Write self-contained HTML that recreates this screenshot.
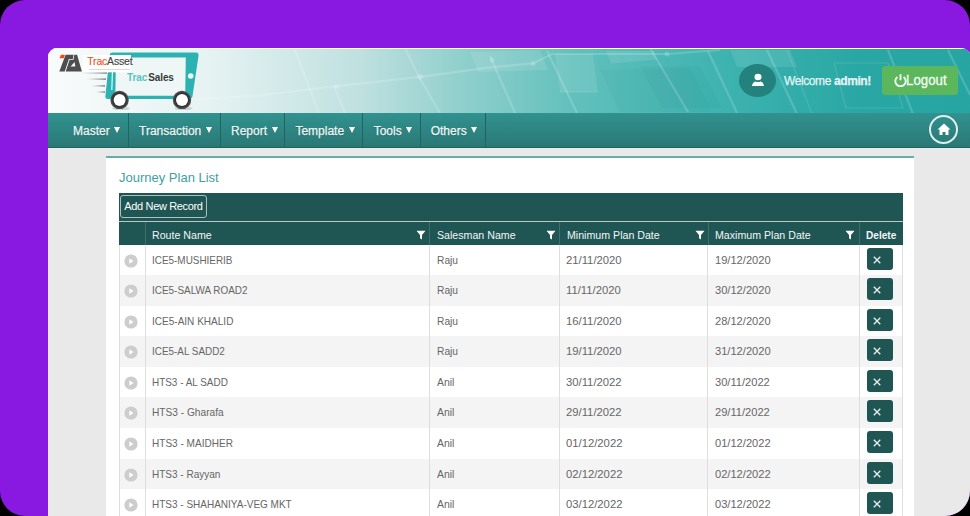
<!DOCTYPE html>
<html><head><meta charset="utf-8">
<style>
*{margin:0;padding:0;box-sizing:border-box}
html,body{width:970px;height:516px;overflow:hidden;background:#000;font-family:"Liberation Sans",sans-serif}
#frame{position:absolute;left:0;top:0;width:970px;height:516px;border-radius:25px;background:#8919e0;overflow:hidden}
#card{position:absolute;left:48px;top:48px;width:923px;height:480px;border-radius:9px 10px 0 0;overflow:hidden;background:#e9e9e9}
#hdr{position:absolute;left:0;top:0;width:923px;height:65px;background:linear-gradient(90deg,#f8fbfb 0%,#f0f7f7 8%,#e7f3f3 17%,#bee0df 34%,#8fcfcc 45%,#62c0bc 57%,#3eb3b0 73%,#29a7a4 88%,#27a5a2 100%)}
#nav{position:absolute;left:0;top:65px;width:923px;height:35px;background:linear-gradient(#31928f,#2a7875);border-bottom:1px solid #1d6461}
.ni{position:absolute;top:0.8px;height:35px;color:#eef6f5;font-size:12px;line-height:35px;white-space:nowrap;-webkit-text-stroke:0.25px #eef6f5;text-shadow:0 1px 1px rgba(0,50,50,.35)}
.ni i{display:inline-block;width:0;height:0;border-left:3.3px solid transparent;border-right:3.3px solid transparent;border-top:6px solid #fff;margin-left:4.5px;position:relative;top:-1.5px}
.sep{position:absolute;top:0;width:1px;height:34px;background:#1f6463}
.abs{position:absolute}
#panel{position:absolute;left:106px;top:156px;width:808px;height:400px;background:#fff;border-top:2px solid #62b0ac}
#title{position:absolute;left:119px;top:170px;font-size:13px;color:#42a09e;white-space:nowrap}
#tbar{position:absolute;left:119px;top:193px;width:784px;height:28px;background:#1f5553}
#addbtn{position:absolute;left:1px;top:2px;width:87px;height:23px;border:1px solid #a9c3c1;border-radius:3px;color:#fff;font-size:11px;line-height:21px;text-align:center;white-space:nowrap;letter-spacing:-0.35px}
#thead{position:absolute;left:119px;top:222px;width:784px;height:23px;background:#1f5553;color:#f2f7f7;font-size:11.5px}
#thead .h{position:absolute;top:1.5px;height:23px;line-height:23px;white-space:nowrap;transform-origin:0 50%;transform:scaleX(.924)}
#thead .s{position:absolute;top:0;width:1px;height:23px;background:#3d6f6c}
.flt{position:absolute;top:7.7px}
#tline{position:absolute;left:119px;top:221px;width:784px;height:1px;background:#b9c9c8}
.row{position:absolute;left:119px;width:783px;height:30px;background:#fff;font-size:11px;color:#666}
.row.alt{background:#f4f4f4}
.row .c{position:absolute;top:0;line-height:30px;white-space:nowrap;transform-origin:0 50%}
.c1{left:33px}.c2{left:317.7px}.c3{left:447.2px}.c4{left:595.7px}
.exp{position:absolute;left:5.3px;top:9.3px;width:14px;height:14px}
.del{position:absolute;left:747.6px;top:3.2px;width:26.5px;height:22px;background:#1f5553;border-radius:3px}.del svg{display:block}
#vlines div{position:absolute;top:245px;width:1px;height:280px;background:#dedede}
</style></head><body>
<div id="frame">
 <div id="card">
  <div id="hdr">
   <svg class="abs" style="left:0;top:0" width="923" height="65" viewBox="48 48 923 65">
    <g fill="#fff" fill-opacity="0.10">
     <path d="M606 51 L654 51 L657 59.5 L611 63.5Z"/>
     <path d="M555 54 L593 54 L598 92 L560 92Z"/>
     <path d="M730 50 L790 50 L797 67 L737 67Z"/>
     <path d="M470 52 L540 50 L548 70 L478 72Z"/>
    </g>
    <g fill="#0c6f6c" fill-opacity="0.05">
     <path d="M640 66 L700 66 L722 108 L662 108Z"/>
     <path d="M600 70 L690 68 L712 112 L620 112Z"/>
    </g>
    <g stroke="#fff" stroke-opacity="0.17" stroke-width="2.2" fill="none">
     <path d="M294 48 L319 113"/>
     <path d="M334 86 L345 113"/>
     <path d="M405 48 L418 75 L440 113"/>
     <path d="M490 56 L515 113"/>
     <path d="M547 51 L577 113"/>
     <path d="M650 48 L688 112"/>
     <path d="M708 51 L737 113"/>
     <path d="M767 50 L797 114"/>
     <path d="M888 50 L913 114"/>
     <path d="M948 50 L970 95"/>
     <path d="M180 100 L257 95.6 L337 86.2 L420.3 76.8 L490 67.4 L533 63.4 L552 54 L667 54 L720 50"/>
    </g>
    <g stroke="#fff" stroke-opacity="0.13" stroke-width="1.2" fill="none">
     <path d="M834 63 L888 63 L903 108 L846 108Z"/>
     <path d="M787 50 L812 114"/>
     <path d="M560 92 L598 92"/>
    </g>
    <g fill="#fff" fill-opacity="0.18"><circle cx="420.3" cy="76.8" r="3"/><circle cx="337" cy="86.2" r="2.5"/><circle cx="492" cy="60" r="2.5"/><circle cx="533" cy="63.4" r="2.5"/><circle cx="667" cy="54" r="2.5"/></g>
   </svg>
   <!-- logo -->
   <svg class="abs" style="left:0;top:0" width="200" height="64" viewBox="48 48 200 64">
    <defs>
     <linearGradient id="sl" x1="0" x2="1"><stop offset="0" stop-color="#999" stop-opacity="0"/><stop offset="1" stop-color="#555"/></linearGradient>
     <radialGradient id="wh" cx="0.5" cy="0.5" r="0.5"><stop offset="0.6" stop-color="#222"/><stop offset="1" stop-color="#555"/></radialGradient>
    </defs>
    <rect x="80" y="72.3" width="27" height="1.4" fill="url(#sl)" opacity=".8"/>
    <rect x="86" y="78.4" width="20" height="1.4" fill="url(#sl)" opacity=".8"/>
    <rect x="91" y="85.2" width="14" height="1.4" fill="url(#sl)" opacity=".8"/>
    <rect x="96" y="91.3" width="9" height="1.4" fill="url(#sl)" opacity=".8"/>
    <path d="M112 52.5 H196 Q199 52.5 198.5 56 L192.5 96 Q192 99 189 99 H108 Q105 99 105.4 96 L109.6 55 Q110 52.5 112 52.5Z" fill="#2cb3b1"/>
    <path d="M116 57.5 H185.8 L185.2 95.8 H115.3Z" fill="#eef6f6"/>
    <path d="M112.5 70 L111.8 90" stroke="#dff" stroke-width="1.2"/>
    <circle cx="190.7" cy="76" r="2.8" fill="#eef6f6"/>
    <rect x="82.5" y="55" width="48.5" height="17.3" fill="#fff"/>
    <ellipse cx="121" cy="108.5" rx="9" ry="1.6" fill="#000" opacity=".15"/><ellipse cx="183.5" cy="108.5" rx="9" ry="1.6" fill="#000" opacity=".15"/>
    <circle cx="119.6" cy="99.9" r="9.2" fill="url(#wh)"/>
    <circle cx="119.6" cy="99.9" r="6" fill="#fff"/>
    <circle cx="182" cy="99.9" r="9.2" fill="url(#wh)"/>
    <circle cx="182" cy="99.9" r="6" fill="#fff"/>
    <path d="M59.6 58.2 L60.9 54.7 H64.9 L63.8 58.2Z" fill="#f3461a"/>
    <path d="M59.3 71.6 L65.6 54.7 H73.6 L72.8 58.9 H68.9 L64.7 71.6Z" fill="#4e4e4e"/>
    <path d="M65.7 71.6 L69.6 59.7 H73.5 L74.3 54.7 H77.1 L81.9 71.6Z M70.6 66.5 H75.3 L74.6 62Z" fill="#4e4e4e" fill-rule="evenodd"/>
   </svg>
   <div class="abs" style="left:39.3px;top:6.6px;font-size:10.5px;letter-spacing:-0.2px;color:#444;white-space:nowrap;-webkit-text-stroke:0.15px #444"><span style="color:#f2521f;-webkit-text-stroke:0.15px #f2521f">Trac</span>Asset</div>
   <div class="abs" style="left:41px;top:21.3px;width:41px;height:1px;background:#999;opacity:.35"></div>
   <div class="abs" style="left:79px;top:23.7px;font-size:10px;color:#444;white-space:nowrap;letter-spacing:-0.1px"><b style="color:#3ebab7;font-weight:bold;opacity:.85">Trac</b><b style="color:#3a3a3a;margin-left:1px">Sales</b></div>
   <!-- welcome -->
   <div class="abs" style="left:690.5px;top:15.5px;width:37px;height:33px;border-radius:50%;background:#23817e"></div>
   <svg class="abs" style="left:702.5px;top:24.5px" width="14" height="14" viewBox="0 0 14 14"><ellipse cx="7" cy="4" rx="3.5" ry="3.3" fill="#fff"/><path d="M1 13 Q1.5 9.5 4.5 8.6 Q7 9.6 9.5 8.6 Q12.5 9.5 13 13Z" fill="#fff"/></svg>
   <div class="abs" style="left:736px;top:25.5px;font-size:12px;color:#e4f4f3;white-space:nowrap;letter-spacing:-0.4px;-webkit-text-stroke:0.25px #e4f4f3">Welcome <b>admin!</b></div>
   <div class="abs" style="left:833.5px;top:18.2px;width:76px;height:29.2px;border-radius:3px;background:#5cb65c"></div>
   <svg class="abs" style="left:845.5px;top:26px" width="13" height="13" viewBox="0 0 13 13"><path d="M3.4 2.9 A5.2 5.2 0 1 0 9.6 2.9" stroke="#f4fbf4" stroke-width="1.9" fill="none"/><path d="M6.5 0.3 V6.3" stroke="#f4fbf4" stroke-width="1.9"/></svg>
   <div class="abs" style="left:858px;top:23.2px;font-size:15px;color:#f4fbf4;white-space:nowrap;-webkit-text-stroke:0.3px #f4fbf4;transform:scaleX(.885);transform-origin:0 50%">Logout</div>
   <div class="abs" style="left:0;top:0;width:923px;height:1px;background:#fff"></div>
  </div>
  <div id="nav">
   <div class="ni" style="left:25px">Master<i></i></div>
   <div class="sep" style="left:80px"></div>
   <div class="ni" style="left:91px">Transaction<i></i></div>
   <div class="sep" style="left:171.5px"></div>
   <div class="ni" style="left:183px">Report<i></i></div>
   <div class="sep" style="left:235.5px"></div>
   <div class="ni" style="left:247.4px">Template<i></i></div>
   <div class="sep" style="left:314px"></div>
   <div class="ni" style="left:325.7px">Tools<i></i></div>
   <div class="sep" style="left:372px"></div>
   <div class="ni" style="left:382.7px">Others<i></i></div>
   <div class="sep" style="left:437px"></div>
   <div class="abs" style="left:880.5px;top:1.5px;width:29px;height:29px;border-radius:50%;border:2px solid #dcefee"></div>
   <svg class="abs" style="left:889px;top:10px" width="14" height="13" viewBox="0 0 14 13"><path d="M7 0.5 L13.5 6.5 H11.5 V12 H8.5 V9 H5.5 V12 H2.5 V6.5 H0.5Z" fill="#fff"/></svg>
  </div>
 </div>
 <div id="panel"></div>
 <div id="title">Journey Plan List</div>
 <div id="tbar"><div id="addbtn">Add New Record</div></div>
 <div id="tline"></div>
 <div id="thead">
  <div class="s" style="left:26px"></div>
  <div class="h" style="left:33px">Route Name</div>
  <svg class="flt" style="left:297px" width="10" height="10" viewBox="0 0 10 10"><path d="M0.5 0.8 H9.5 L6 5 V9.5 L4 8.3 V5Z" fill="#fff"/></svg><svg class="flt" style="left:427px" width="10" height="10" viewBox="0 0 10 10"><path d="M0.5 0.8 H9.5 L6 5 V9.5 L4 8.3 V5Z" fill="#fff"/></svg><svg class="flt" style="left:576px" width="10" height="10" viewBox="0 0 10 10"><path d="M0.5 0.8 H9.5 L6 5 V9.5 L4 8.3 V5Z" fill="#fff"/></svg><svg class="flt" style="left:726px" width="10" height="10" viewBox="0 0 10 10"><path d="M0.5 0.8 H9.5 L6 5 V9.5 L4 8.3 V5Z" fill="#fff"/></svg>
  <div class="s" style="left:310px"></div>
  <div class="h" style="left:317.7px">Salesman Name</div>
  <div class="s" style="left:440px"></div>
  <div class="h" style="left:447.9px">Minimum Plan Date</div>
  <div class="s" style="left:589px"></div>
  <div class="h" style="left:595.9px">Maximum Plan Date</div>
  <div class="s" style="left:740px"></div>
  <div class="h" style="left:746.5px;font-weight:bold;transform:scaleX(.878)">Delete</div>
 </div>
<div class="row" style="top:245px;height:30px"><div class="exp"><svg width="14" height="14" viewBox="0 0 14 14"><circle cx="7" cy="7" r="6.6" fill="#cdcdcd"/><path d="M5.3 4.3 L9.5 7 L5.3 9.7Z" fill="#fff"/></svg></div><div class="c c1" style="transform:scaleX(0.902)">ICE5-MUSHIERIB</div><div class="c c2" style="transform:scaleX(0.93)">Raju</div><div class="c c3" style="transform:scaleX(1.025)">21/11/2020</div><div class="c c4" style="transform:scaleX(1.01)">19/12/2020</div><div class="del"><svg width="27" height="22" viewBox="0 0 27 22"><path d="M6.8 8.7 L13.3 15.3 M13.3 8.7 L6.8 15.3" stroke="#e6eeee" stroke-width="1.3"/></svg></div></div>
<div class="row alt" style="top:275px;height:31px"><div class="exp"><svg width="14" height="14" viewBox="0 0 14 14"><circle cx="7" cy="7" r="6.6" fill="#cdcdcd"/><path d="M5.3 4.3 L9.5 7 L5.3 9.7Z" fill="#fff"/></svg></div><div class="c c1" style="transform:scaleX(0.903)">ICE5-SALWA ROAD2</div><div class="c c2" style="transform:scaleX(0.93)">Raju</div><div class="c c3" style="transform:scaleX(1.025)">11/11/2020</div><div class="c c4" style="transform:scaleX(1.01)">30/12/2020</div><div class="del"><svg width="27" height="22" viewBox="0 0 27 22"><path d="M6.8 8.7 L13.3 15.3 M13.3 8.7 L6.8 15.3" stroke="#e6eeee" stroke-width="1.3"/></svg></div></div>
<div class="row" style="top:306px;height:30px"><div class="exp"><svg width="14" height="14" viewBox="0 0 14 14"><circle cx="7" cy="7" r="6.6" fill="#cdcdcd"/><path d="M5.3 4.3 L9.5 7 L5.3 9.7Z" fill="#fff"/></svg></div><div class="c c1" style="transform:scaleX(0.912)">ICE5-AIN KHALID</div><div class="c c2" style="transform:scaleX(0.93)">Raju</div><div class="c c3" style="transform:scaleX(1.025)">16/11/2020</div><div class="c c4" style="transform:scaleX(1.01)">28/12/2020</div><div class="del"><svg width="27" height="22" viewBox="0 0 27 22"><path d="M6.8 8.7 L13.3 15.3 M13.3 8.7 L6.8 15.3" stroke="#e6eeee" stroke-width="1.3"/></svg></div></div>
<div class="row alt" style="top:336px;height:31px"><div class="exp"><svg width="14" height="14" viewBox="0 0 14 14"><circle cx="7" cy="7" r="6.6" fill="#cdcdcd"/><path d="M5.3 4.3 L9.5 7 L5.3 9.7Z" fill="#fff"/></svg></div><div class="c c1" style="transform:scaleX(0.9)">ICE5-AL SADD2</div><div class="c c2" style="transform:scaleX(0.93)">Raju</div><div class="c c3" style="transform:scaleX(1.025)">19/11/2020</div><div class="c c4" style="transform:scaleX(1.01)">31/12/2020</div><div class="del"><svg width="27" height="22" viewBox="0 0 27 22"><path d="M6.8 8.7 L13.3 15.3 M13.3 8.7 L6.8 15.3" stroke="#e6eeee" stroke-width="1.3"/></svg></div></div>
<div class="row" style="top:367px;height:30px"><div class="exp"><svg width="14" height="14" viewBox="0 0 14 14"><circle cx="7" cy="7" r="6.6" fill="#cdcdcd"/><path d="M5.3 4.3 L9.5 7 L5.3 9.7Z" fill="#fff"/></svg></div><div class="c c1" style="transform:scaleX(0.903)">HTS3 - AL SADD</div><div class="c c2" style="transform:scaleX(0.95)">Anil</div><div class="c c3" style="transform:scaleX(1.025)">30/11/2022</div><div class="c c4" style="transform:scaleX(1.01)">30/11/2022</div><div class="del"><svg width="27" height="22" viewBox="0 0 27 22"><path d="M6.8 8.7 L13.3 15.3 M13.3 8.7 L6.8 15.3" stroke="#e6eeee" stroke-width="1.3"/></svg></div></div>
<div class="row alt" style="top:397px;height:31px"><div class="exp"><svg width="14" height="14" viewBox="0 0 14 14"><circle cx="7" cy="7" r="6.6" fill="#cdcdcd"/><path d="M5.3 4.3 L9.5 7 L5.3 9.7Z" fill="#fff"/></svg></div><div class="c c1" style="transform:scaleX(0.923)">HTS3 - Gharafa</div><div class="c c2" style="transform:scaleX(0.95)">Anil</div><div class="c c3" style="transform:scaleX(1.025)">29/11/2022</div><div class="c c4" style="transform:scaleX(1.01)">29/11/2022</div><div class="del"><svg width="27" height="22" viewBox="0 0 27 22"><path d="M6.8 8.7 L13.3 15.3 M13.3 8.7 L6.8 15.3" stroke="#e6eeee" stroke-width="1.3"/></svg></div></div>
<div class="row" style="top:428px;height:31px"><div class="exp"><svg width="14" height="14" viewBox="0 0 14 14"><circle cx="7" cy="7" r="6.6" fill="#cdcdcd"/><path d="M5.3 4.3 L9.5 7 L5.3 9.7Z" fill="#fff"/></svg></div><div class="c c1" style="transform:scaleX(0.913)">HTS3 - MAIDHER</div><div class="c c2" style="transform:scaleX(0.95)">Anil</div><div class="c c3" style="transform:scaleX(1.025)">01/12/2022</div><div class="c c4" style="transform:scaleX(1.01)">01/12/2022</div><div class="del"><svg width="27" height="22" viewBox="0 0 27 22"><path d="M6.8 8.7 L13.3 15.3 M13.3 8.7 L6.8 15.3" stroke="#e6eeee" stroke-width="1.3"/></svg></div></div>
<div class="row alt" style="top:459px;height:30px"><div class="exp"><svg width="14" height="14" viewBox="0 0 14 14"><circle cx="7" cy="7" r="6.6" fill="#cdcdcd"/><path d="M5.3 4.3 L9.5 7 L5.3 9.7Z" fill="#fff"/></svg></div><div class="c c1" style="transform:scaleX(0.91)">HTS3 - Rayyan</div><div class="c c2" style="transform:scaleX(0.95)">Anil</div><div class="c c3" style="transform:scaleX(1.025)">02/12/2022</div><div class="c c4" style="transform:scaleX(1.01)">02/12/2022</div><div class="del"><svg width="27" height="22" viewBox="0 0 27 22"><path d="M6.8 8.7 L13.3 15.3 M13.3 8.7 L6.8 15.3" stroke="#e6eeee" stroke-width="1.3"/></svg></div></div>
<div class="row" style="top:489px;height:30px"><div class="exp"><svg width="14" height="14" viewBox="0 0 14 14"><circle cx="7" cy="7" r="6.6" fill="#cdcdcd"/><path d="M5.3 4.3 L9.5 7 L5.3 9.7Z" fill="#fff"/></svg></div><div class="c c1" style="transform:scaleX(0.908)">HTS3 - SHAHANIYA-VEG MKT</div><div class="c c2" style="transform:scaleX(0.95)">Anil</div><div class="c c3" style="transform:scaleX(1.025)">03/12/2022</div><div class="c c4" style="transform:scaleX(1.01)">03/12/2022</div><div class="del"><svg width="27" height="22" viewBox="0 0 27 22"><path d="M6.8 8.7 L13.3 15.3 M13.3 8.7 L6.8 15.3" stroke="#e6eeee" stroke-width="1.3"/></svg></div></div>
 <div id="vlines"><div style="left:119px"></div><div style="left:145px"></div><div style="left:429px"></div><div style="left:559px"></div><div style="left:707px"></div><div style="left:859px"></div><div style="left:902px"></div></div>
</div>
</body></html>
